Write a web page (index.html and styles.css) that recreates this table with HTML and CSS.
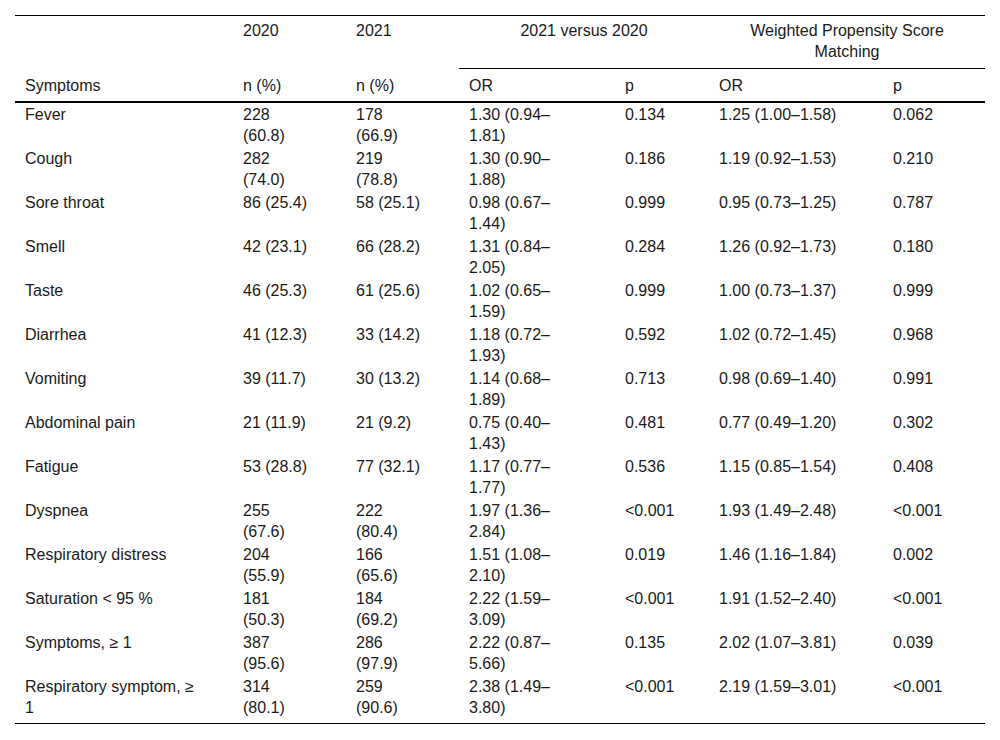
FILE: index.html
```html
<!DOCTYPE html>
<html>
<head>
<meta charset="utf-8">
<link rel="stylesheet" href="styles.css">
</head>
<body>
<table class="data">
  <colgroup>
    <col class="c1"><col class="c2"><col class="c3"><col class="c4"><col class="c5"><col class="c6"><col class="c7">
  </colgroup>
  <thead>
    <tr class="h1">
      <th></th>
      <th>2020</th>
      <th>2021</th>
      <th colspan="2" class="grp">2021 versus 2020</th>
      <th colspan="2" class="grp">Weighted Propensity Score Matching</th>
    </tr>
    <tr class="h2">
      <th>Symptoms</th>
      <th>n (%)</th>
      <th>n (%)</th>
      <th>OR</th>
      <th>p</th>
      <th>OR</th>
      <th>p</th>
    </tr>
  </thead>
  <tbody>
    <tr><td>Fever</td><td>228 (60.8)</td><td>178 (66.9)</td><td>1.30 (0.94–1.81)</td><td>0.134</td><td>1.25 (1.00–1.58)</td><td>0.062</td></tr>
    <tr><td>Cough</td><td>282 (74.0)</td><td>219 (78.8)</td><td>1.30 (0.90–1.88)</td><td>0.186</td><td>1.19 (0.92–1.53)</td><td>0.210</td></tr>
    <tr><td>Sore throat</td><td>86 (25.4)</td><td>58 (25.1)</td><td>0.98 (0.67–1.44)</td><td>0.999</td><td>0.95 (0.73–1.25)</td><td>0.787</td></tr>
    <tr><td>Smell</td><td>42 (23.1)</td><td>66 (28.2)</td><td>1.31 (0.84–2.05)</td><td>0.284</td><td>1.26 (0.92–1.73)</td><td>0.180</td></tr>
    <tr><td>Taste</td><td>46 (25.3)</td><td>61 (25.6)</td><td>1.02 (0.65–1.59)</td><td>0.999</td><td>1.00 (0.73–1.37)</td><td>0.999</td></tr>
    <tr><td>Diarrhea</td><td>41 (12.3)</td><td>33 (14.2)</td><td>1.18 (0.72–1.93)</td><td>0.592</td><td>1.02 (0.72–1.45)</td><td>0.968</td></tr>
    <tr><td>Vomiting</td><td>39 (11.7)</td><td>30 (13.2)</td><td>1.14 (0.68–1.89)</td><td>0.713</td><td>0.98 (0.69–1.40)</td><td>0.991</td></tr>
    <tr><td>Abdominal pain</td><td>21 (11.9)</td><td>21 (9.2)</td><td>0.75 (0.40–1.43)</td><td>0.481</td><td>0.77 (0.49–1.20)</td><td>0.302</td></tr>
    <tr><td>Fatigue</td><td>53 (28.8)</td><td>77 (32.1)</td><td>1.17 (0.77–1.77)</td><td>0.536</td><td>1.15 (0.85–1.54)</td><td>0.408</td></tr>
    <tr><td>Dyspnea</td><td>255 (67.6)</td><td>222 (80.4)</td><td>1.97 (1.36–2.84)</td><td>&lt;0.001</td><td>1.93 (1.49–2.48)</td><td>&lt;0.001</td></tr>
    <tr><td>Respiratory distress</td><td>204 (55.9)</td><td>166 (65.6)</td><td>1.51 (1.08–2.10)</td><td>0.019</td><td>1.46 (1.16–1.84)</td><td>0.002</td></tr>
    <tr><td>Saturation &lt; 95 %</td><td>181 (50.3)</td><td>184 (69.2)</td><td>2.22 (1.59–3.09)</td><td>&lt;0.001</td><td>1.91 (1.52–2.40)</td><td>&lt;0.001</td></tr>
    <tr><td>Symptoms, ≥ 1</td><td>387 (95.6)</td><td>286 (97.9)</td><td>2.22 (0.87–5.66)</td><td>0.135</td><td>2.02 (1.07–3.81)</td><td>0.039</td></tr>
    <tr class="last"><td>Respiratory symptom, ≥ 1</td><td>314 (80.1)</td><td>259 (90.6)</td><td>2.38 (1.49–3.80)</td><td>&lt;0.001</td><td>2.19 (1.59–3.01)</td><td>&lt;0.001</td></tr>
  </tbody>
</table>
</body>
</html>
```

FILE: styles.css
```css
html, body {
  margin: 0;
  padding: 0;
  background: #ffffff;
}

body {
  padding: 15px;
  font-family: "Liberation Sans", Arial, sans-serif;
  font-size: 16px;
  line-height: 21px;
  color: #1a1a1a;
}

.data {
  width: 970px;
  table-layout: fixed;
  border-collapse: collapse;
  border-top: 1px solid #000;
  border-bottom: 1px solid #000;
}

.c1 { width: 218px; }
.c2 { width: 113px; }
.c3 { width: 113px; }
.c4 { width: 156px; }
.c5 { width: 94px; }
.c6 { width: 174px; }
.c7 { width: 102px; }

.data th,
.data td {
  text-align: left;
  font-weight: normal;
  vertical-align: top;
  padding: 1px 36px 1px 10px;
}

.h1 th {
  padding-top: 4px;
  padding-bottom: 6px;
}

.h1 th.grp {
  text-align: center;
  padding-left: 10px;
  padding-right: 10px;
  border-bottom: 1px solid #000;
}

.h2 th {
  padding-top: 6px;
  padding-bottom: 5px;
  border-bottom: 2px solid #000;
}

.last td {
  padding-bottom: 5px;
}
```
